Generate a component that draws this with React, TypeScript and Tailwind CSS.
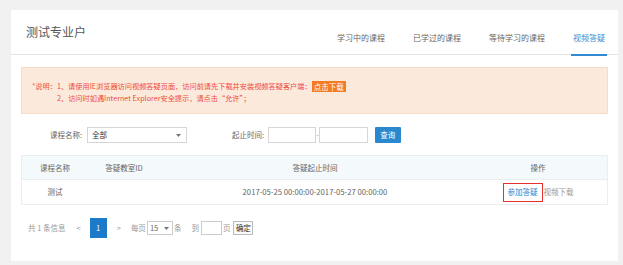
import type { FC } from 'react';

const tabs = ['学习中的课程', '已学过的课程', '等待学习的课程', '视频答疑'];

const Caret: FC = () => (
  <svg width="5" height="3" viewBox="0 0 5 3" className="fill-[#777]">
    <path d="M0 0 L5 0 L2.5 3 Z" />
  </svg>
);

const App: FC = () => {
  return (
    <div
      className="w-[623px] h-[265px] bg-[#f1f1f1] pt-[10px] pl-[11px] overflow-hidden text-[#666]"
      style={{ fontFamily: '"Noto Sans CJK SC", "Noto Sans", sans-serif' }}
    >
      <div className="w-[607px] h-[251px] bg-white">
        {/* Header */}
        <div className="flex justify-between h-[45px] border-b border-[#e6e6e6]">
          <div className="pt-[14px] pl-[15px] text-[12px] leading-[16px] text-[#555]">测试专业户</div>
          <div className="flex gap-[24px] pr-[11px]">
            {tabs.map((t, i) => (
              <div
                key={t}
                className={
                  i === 3
                    ? 'pt-[23px] px-[2px] text-[8px] leading-[10px] text-[#3a8fd2] border-b-2 border-[#2f8ad3] mb-[-1px] h-[46px]'
                    : 'pt-[23px] px-[2px] text-[8px] leading-[10px] text-[#666]'
                }
              >
                {t}
              </div>
            ))}
          </div>
        </div>

        {/* Notice */}
        <div className="mx-[10px] mt-[12px] h-[47px] bg-[#fbeadc] border border-[#f4dcc8] pt-[12px] pl-[10px] text-[7.2px] leading-[12px] text-[#ee4b3c]">
          <div className="flex items-center">
            <span>*说明：</span>
            <span>1、请使用IE浏览器访问视频答疑页面，访问前请先下载并安装视频答疑客户端：</span>
            <span className="bg-[#f47b1f] text-white px-[2px] leading-[11px] h-[11px] text-[7.5px]">点击下载</span>
          </div>
          <div className="pl-[25px]">2、访问时如遇Internet Explorer安全提示，请点击“允许”；</div>
        </div>

        {/* Filter */}
        <div className="flex items-center mt-[13px] h-[16px] pl-[39px] text-[7.5px] text-[#666]">
          <span className="mr-[5px]">课程名称:</span>
          <div className="w-[100px] h-[16px] border border-[#d6d6d6] flex items-center justify-between pl-[4px] pr-[5px] text-[#333]">
            <span>全部</span>
            <Caret />
          </div>
          <span className="ml-[45px] mr-[4px]">起止时间:</span>
          <div className="w-[48px] h-[16px] border border-[#d6d6d6]" />
          <span className="text-[#999]">-</span>
          <div className="w-[49px] h-[16px] border border-[#d6d6d6]" />
          <div className="ml-[7px] w-[26px] h-[16px] bg-[#2a88cf] text-white flex items-center justify-center rounded-[1px]">查询</div>
        </div>

        {/* Table */}
        <div className="mx-[10px] mt-[12px] border border-[#e9eef0] text-[7.5px]">
          <div className="grid grid-cols-[66px_72px_310px_136px] h-[24px] bg-[#f4f9fb] items-center border-b border-[#e9eef0] text-[#666]">
            <div className="text-center">课程名称</div>
            <div className="text-center">答疑教室ID</div>
            <div className="text-center">答疑起止时间</div>
            <div className="text-center">操作</div>
          </div>
          <div className="grid grid-cols-[66px_72px_310px_136px] h-[24px] items-center text-[#666]">
            <div className="text-center">测试</div>
            <div />
            <div className="text-center text-[7.7px]">2017-05-25 00:00:00-2017-05-27 00:00:00</div>
            <div className="flex justify-center items-center">
              <span className="border-[1.5px] border-[#e8302f] text-[#2f86cf] px-[4px] h-[19px] flex items-center">参加答疑</span>
              <span className="text-[#999] ml-[1px]">视频下载</span>
            </div>
          </div>
        </div>

        {/* Pagination */}
        <div className="flex items-center mt-[13px] pl-[17px] h-[20px] text-[7.5px] text-[#999]">
          <span>共 1 条信息</span>
          <span className="ml-[11px]">&lt;</span>
          <div className="ml-[9px] w-[17px] h-[20px] bg-[#1b7bc8] text-white flex items-center justify-center">1</div>
          <span className="ml-[10px]">&gt;</span>
          <span className="ml-[10px]">每页</span>
          <div className="ml-[1px] w-[26px] h-[14px] border border-[#ccc] flex items-center justify-between pl-[2px] pr-[3px] text-[#666]">
            <span>15</span>
            <Caret />
          </div>
          <span className="ml-[1px]">条</span>
          <span className="ml-[10px]">到</span>
          <div className="ml-[2px] w-[21px] h-[14px] border border-[#ccc]" />
          <span className="ml-[1px]">页</span>
          <div className="ml-[3px] w-[20px] h-[14px] border border-[#bbb] bg-[#fafafa] text-[#333] flex items-center justify-center">确定</div>
        </div>
      </div>
    </div>
  );
};

export default App;
